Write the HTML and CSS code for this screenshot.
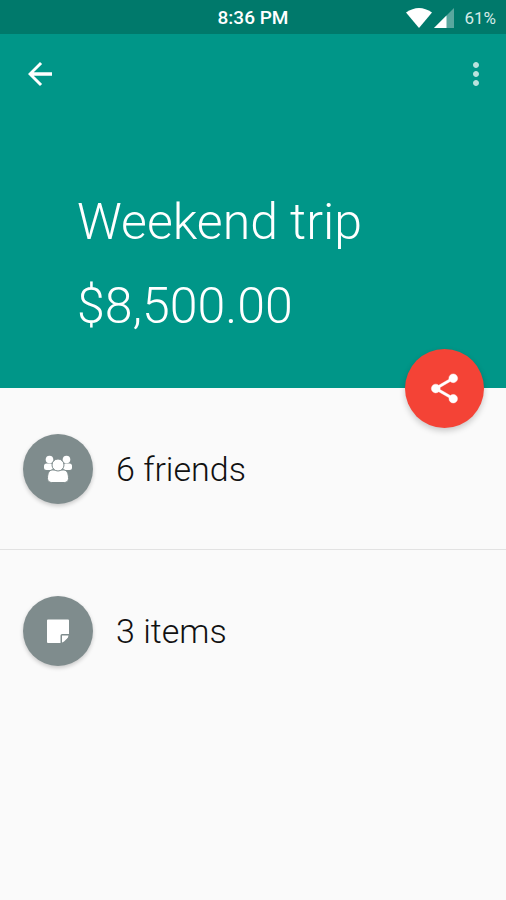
FILE: index.html
```html
<!DOCTYPE html>
<html lang="en">
<head>
<meta charset="utf-8">
<meta name="viewport" content="width=device-width, initial-scale=1">
<title>Weekend trip</title>
<link rel="stylesheet" href="styles.css">
</head>
<body>
<div class="status">
  <span class="clock">8:36 PM</span>
  <div class="indicators">
    <svg class="wifi" viewBox="0 0 26 20" aria-hidden="true"><path d="M0 4.500Q13-4.500 26 4.500L13 20Z"/></svg>
    <svg class="signal" viewBox="0 0 20 20" aria-hidden="true"><path d="M20 0V20H0Z" opacity=".35"/><path d="M12.500 7.500V20H0Z"/></svg>
    <span class="battery">61%</span>
  </div>
</div>
<header class="hero">
  <div class="toolbar">
    <button class="tool" type="button" aria-label="Back">
      <svg viewBox="0 0 24 24"><path d="M20 10.800H7.830l5.590-5.390L12 4l-8 8 8 8 1.410-1.410L7.830 13.200H20z"/></svg>
    </button>
    <button class="tool more" type="button" aria-label="More options">
      <svg viewBox="0 0 24 24"><path d="M12 8c1.100 0 2-.9 2-2s-.9-2-2-2-2 .9-2 2 .9 2 2 2zm0 2c-1.100 0-2 .9-2 2s.9 2 2 2 2-.9 2-2-.9-2-2-2zm0 6c-1.100 0-2 .9-2 2s.9 2 2 2 2-.9 2-2-.9-2-2-2z"/></svg>
    </button>
  </div>
  <div class="summary">
    <h1>Weekend trip</h1>
    <p>$8,500.00</p>
  </div>
  <button class="fab" type="button" aria-label="Share">
    <svg viewBox="0 0 24 24"><path stroke="currentColor" stroke-width=".3" d="M18 16.080c-.76 0-1.440.3-1.960.77L8.910 12.700c.05-.23.09-.46.09-.7s-.04-.47-.09-.7l7.050-4.110c.54.5 1.250.81 2.040.81 1.660 0 3-1.340 3-3s-1.340-3-3-3-3 1.340-3 3c0 .24.04.47.09.7L8.040 9.810C7.500 9.310 6.790 9 6 9c-1.660 0-3 1.340-3 3s1.340 3 3 3c.79 0 1.500-.31 2.040-.81l7.120 4.160c-.05.21-.08.43-.08.65 0 1.610 1.310 2.920 2.920 2.920s2.920-1.310 2.920-2.920-1.310-2.920-2.920-2.920z"/></svg>
  </button>
</header>
<main>
  <ul class="list">
    <li class="row">
      <span class="badge">
        <svg viewBox="0 0 30 28" aria-hidden="true">
          <rect x="1" y="8.500" width="9" height="6.500" rx="2.500"/>
          <rect x="20" y="8.500" width="9" height="6.500" rx="2.500"/>
          <circle cx="6.500" cy="4.500" r="3.800"/>
          <circle cx="23.500" cy="4.500" r="3.800"/>
          <path class="cut" d="M4.500 23.500c0-5 1.500-8.500 5-8.500h11c3.500 0 5 3.500 5 8.500 0 2.500-1.800 4-4.200 4H8.700c-2.400 0-4.200-1.500-4.200-4z"/>
          <circle class="cut" cx="15" cy="10" r="6"/>
        </svg>
      </span>
      <span>6 friends</span>
    </li>
    <li class="row">
      <span class="badge">
        <svg viewBox="0 0 30 28" aria-hidden="true">
          <path d="M5 2.500h20q1 0 1 1V17h-7q-1.500 0-1.500 1.500V26H5q-1 0-1-1V3.500q0-1 1-1z"/>
          <path d="M19 18.500h6.500q-.3 1.800-1.400 3l-2.800 2.800q-1 1-2.300 1.200z"/>
        </svg>
      </span>
      <span>3 items</span>
    </li>
  </ul>
</main>
</body>
</html>
```

FILE: styles.css
```css
* {
  box-sizing: border-box;
}

body {
  margin: 0;
  min-height: 100vh;
  background: #fafafa;
  color: #111;
  font-family: Roboto, "Liberation Sans", sans-serif;
}

svg {
  display: block;
  fill: currentColor;
}

button {
  display: grid;
  place-items: center;
  padding: 0;
  border: 0;
  background: none;
  color: #fff;
}

.status {
  display: grid;
  grid-template-columns: 1fr auto 1fr;
  align-items: center;
  height: 34px;
  padding: 1px 10px 0;
  background: #00796b;
  color: #fff;
}

.clock {
  grid-column: 2;
  font-size: 19px;
  font-weight: 500;
}

.indicators {
  display: flex;
  align-items: center;
  justify-content: flex-end;
  gap: 2px;
}

.wifi {
  width: 26px;
  height: 20px;
}

.signal {
  width: 20px;
  height: 20px;
}

.battery {
  margin-left: 8px;
  color: #d5ebe8;
  font-size: 17px;
}

.hero {
  position: relative;
  background: #009688;
  color: #fff;
}

.toolbar {
  display: flex;
  align-items: center;
  justify-content: space-between;
  height: 80px;
  padding: 0 12px 0 22px;
}

.tool svg {
  width: 36px;
  height: 36px;
}

.more {
  color: #b9e2de;
}

.summary {
  padding: 66px 24px 40px 77px;
}

.summary h1,
.summary p {
  margin: 0;
  font-size: 50px;
  font-weight: 300;
  line-height: 84px;
}

.fab {
  position: absolute;
  right: 22px;
  bottom: -40px;
  width: 79px;
  height: 79px;
  border-radius: 50%;
  background: #f44336;
  box-shadow: 0 3px 6px rgba(0, 0, 0, 0.2);
}

.fab svg {
  width: 35px;
  height: 35px;
}

.list {
  margin: 0;
  padding: 0;
  list-style: none;
}

.row {
  display: flex;
  align-items: center;
  gap: 23px;
  height: 161px;
  padding: 1px 23px 0;
  font-size: 34px;
  font-weight: 300;
}

.row + .row {
  border-top: 1px solid #e2e2e2;
}

.badge {
  display: grid;
  place-items: center;
  width: 70px;
  height: 70px;
  border-radius: 50%;
  background: #7f8c8d;
  box-shadow: 0 2px 4px rgba(0, 0, 0, 0.2);
  color: #fff;
}

.badge svg {
  width: 30px;
  height: 28px;
}

.cut {
  stroke: #7f8c8d;
  stroke-width: 1;
}
```
